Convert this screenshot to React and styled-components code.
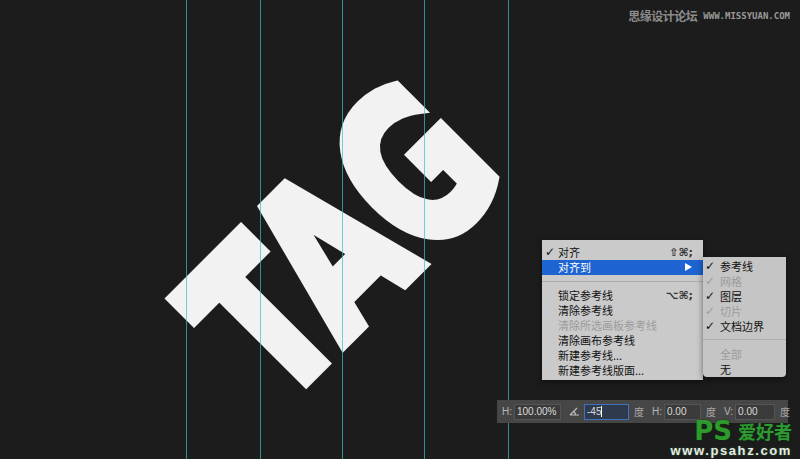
import styled, { createGlobalStyle } from "styled-components";

const GlobalStyle = createGlobalStyle`
  html, body {
    margin: 0;
    padding: 0;
    background: #1c1c1c;
  }
  body {
    font-family: "Liberation Sans", "Noto Sans CJK SC", sans-serif;
  }
`;

const guides = [186, 260, 342, 424, 508];

const mainItems = [
  { label: "对齐", checked: true, shortcut: "⇧⌘;" },
  { label: "对齐到", active: true, arrow: true },
  { sep: true },
  { label: "锁定参考线", shortcut: "⌥⌘;" },
  { label: "清除参考线" },
  { label: "清除所选画板参考线", disabled: true },
  { label: "清除画布参考线" },
  { label: "新建参考线..." },
  { label: "新建参考线版面..." },
];

const subItems = [
  { label: "参考线", checked: true },
  { label: "网格", checked: true, disabled: true },
  { label: "图层", checked: true },
  { label: "切片", checked: true, disabled: true },
  { label: "文档边界", checked: true },
  { sep: true },
  { label: "全部", disabled: true },
  { label: "无" },
];

export default function App() {
  return (
    <>
      <GlobalStyle />
      <Canvas>
        <Artwork width="800" height="459">
          <text
            x="279"
            y="408"
            transform="rotate(-45 279 408)"
            fontFamily="DejaVu Sans"
            fontWeight="700"
            fontSize="209"
            textLength="326"
            lengthAdjust="spacingAndGlyphs"
            fill="#f2f2f2"
            stroke="#f2f2f2"
            strokeWidth="12"
            strokeLinejoin="miter"
          >
            TAG
          </text>
        </Artwork>

        {guides.map((x) => (
          <Guide key={x} $x={x} />
        ))}

        <TopMark>
          <span>思缘设计论坛</span>
          <MarkUrl>WWW.MISSYUAN.COM</MarkUrl>
        </TopMark>

        <Menu>
          {mainItems.map((item, i) =>
            item.sep ? (
              <Separator key={i} />
            ) : (
              <Item key={i} $active={item.active} $disabled={item.disabled}>
                <Check>{item.checked ? "✓" : ""}</Check>
                <Label>{item.label}</Label>
                {item.shortcut && <Shortcut>{item.shortcut}</Shortcut>}
                {item.arrow && <Arrow />}
              </Item>
            )
          )}
        </Menu>

        <SubMenu>
          {subItems.map((item, i) =>
            item.sep ? (
              <Separator key={i} />
            ) : (
              <Item key={i} $disabled={item.disabled}>
                <Check $sub>{item.checked ? "✓" : ""}</Check>
                <Label>{item.label}</Label>
              </Item>
            )
          )}
        </SubMenu>

        <Toolbar>
          <Group>
            <Key>H:</Key>
            <Field $w={47}>100.00%</Field>
          </Group>
          <Group>
            <AngleIcon width="11" height="9" viewBox="0 0 11 9">
              <path d="M1 8 L8 1 M1 8 H10 M5 4.5 Q6.5 6 6.5 8" stroke="#bdbdbd" strokeWidth="1.2" fill="none" />
            </AngleIcon>
            <Field $w={45} $focus>
              -45<Caret />
            </Field>
            <Unit>度</Unit>
          </Group>
          <Group>
            <Key>H:</Key>
            <Field $w={37}>0.00</Field>
            <Unit>度</Unit>
          </Group>
          <Group>
            <Key>V:</Key>
            <Field $w={40}>0.00</Field>
            <Unit>度</Unit>
          </Group>
        </Toolbar>

        <Logo>
          <LogoTop>
            <LogoPs>PS</LogoPs>
            <LogoCn>爱好者</LogoCn>
          </LogoTop>
          <LogoUrl>www.psahz.com</LogoUrl>
        </Logo>
      </Canvas>
    </>
  );
}

const Canvas = styled.div`
  position: relative;
  width: 800px;
  height: 459px;
  overflow: hidden;
  background: #1c1c1c;
`;

const Artwork = styled.svg`
  position: absolute;
  left: 0;
  top: 0;
`;

const Guide = styled.div`
  position: absolute;
  top: 0;
  bottom: 0;
  left: ${(p) => p.$x}px;
  width: 1px;
  background: rgba(60, 190, 200, 0.7);
`;

const TopMark = styled.div`
  position: absolute;
  right: 10px;
  top: 7px;
  display: flex;
  align-items: center;
  gap: 6px;
  color: #8c8c8c;
  font-family: "Noto Sans CJK SC", sans-serif;
  font-size: 12px;
  font-weight: 700;
  letter-spacing: -0.5px;
`;

const MarkUrl = styled.span`
  font-family: "DejaVu Sans Mono", monospace;
  font-size: 9px;
  letter-spacing: 0;
  color: #9a9a9a;
`;

const Menu = styled.div`
  position: absolute;
  left: 542px;
  top: 240px;
  width: 161px;
  padding: 4.5px 0 2px;
  background: #cacaca;
  font-family: "Noto Sans CJK SC", sans-serif;
  font-size: 11px;
  color: #111;
  box-shadow: 0 2px 6px rgba(0, 0, 0, 0.5);
`;

const SubMenu = styled(Menu)`
  left: 703px;
  top: 257px;
  width: 83px;
  padding: 1px 0 1px;
  background: #c5c5c5;
  border-radius: 0 0 4px 4px;
`;

const Item = styled.div`
  display: flex;
  align-items: center;
  height: 15px;
  padding-right: 10px;
  background: ${(p) => (p.$active ? "#1d63d1" : "transparent")};
  color: ${(p) => (p.$active ? "#fff" : p.$disabled ? "#9c9c9c" : "#111")};
`;

const Check = styled.span`
  width: ${(p) => (p.$sub ? "17px" : "16px")};
  padding-left: ${(p) => (p.$sub ? "2px" : "3px")};
  box-sizing: border-box;
  font-family: "DejaVu Sans", sans-serif;
  font-size: 12px;
  font-weight: 700;
`;

const Label = styled.span`
  flex: 1;
  white-space: nowrap;
`;

const Shortcut = styled.span`
  font-family: "DejaVu Sans", sans-serif;
  font-size: 11px;
  font-weight: 700;
  color: #333;
`;

const Arrow = styled.span`
  width: 0;
  height: 0;
  margin-right: 1px;
  border-top: 4px solid transparent;
  border-bottom: 4px solid transparent;
  border-left: 7px solid #fff;
`;

const Separator = styled.div`
  height: 1px;
  margin: 6px 0;
  background: #adadad;
`;

const Toolbar = styled.div`
  position: absolute;
  left: 497px;
  top: 400px;
  width: 291px;
  height: 23px;
  box-sizing: border-box;
  padding: 0 5px;
  display: flex;
  align-items: center;
  gap: 8px;
  background: #464646;
  font-family: "Liberation Sans", "Noto Sans CJK SC", sans-serif;
  font-size: 10px;
  color: #c8c8c8;
`;

const Group = styled.div`
  display: flex;
  align-items: center;
  gap: 2px;
`;

const Key = styled.span`
  color: #b5b5b5;
`;

const Field = styled.div`
  width: ${(p) => p.$w}px;
  height: 16px;
  box-sizing: border-box;
  padding-left: 2px;
  display: flex;
  align-items: center;
  background: ${(p) => (p.$focus ? "#2f3b4d" : "#3b3b3b")};
  border: 1px solid ${(p) => (p.$focus ? "#3f72c0" : "#555")};
  color: #dcdcdc;
  margin-right: 3px;
  &:last-child {
    margin-right: 0;
  }
`;

const Caret = styled.span`
  width: 1px;
  height: 11px;
  background: #fff;
`;

const Unit = styled.span`
  color: #a8a8a8;
  font-family: "Noto Sans CJK SC", sans-serif;
  font-size: 10px;
`;

const AngleIcon = styled.svg`
  margin-right: 2px;
`;

const Logo = styled.div`
  position: absolute;
  right: 8px;
  bottom: 2px;
  display: flex;
  flex-direction: column;
  align-items: flex-end;
  gap: 1px;
`;

const LogoTop = styled.div`
  display: flex;
  align-items: center;
  gap: 6px;
  height: 24px;
  line-height: 24px;
`;

const LogoPs = styled.span`
  font-family: "DejaVu Sans", sans-serif;
  font-weight: 700;
  font-size: 26px;
  line-height: 24px;
  color: #2e9a2e;
  text-shadow: 0 0 2px #0a3a0a;
`;

const LogoCn = styled.span`
  font-family: "Noto Sans CJK SC", sans-serif;
  font-weight: 700;
  font-size: 18px;
  line-height: 22px;
  color: #2f9a34;
  text-shadow: 0 0 2px #0a3a0a;
`;

const LogoUrl = styled.span`
  font-family: "Liberation Sans", sans-serif;
  font-weight: 700;
  font-size: 13px;
  line-height: 13px;
  letter-spacing: 1.6px;
  color: #e8e8e8;
  text-shadow: 0 0 2px #2a6a2a;
`;
